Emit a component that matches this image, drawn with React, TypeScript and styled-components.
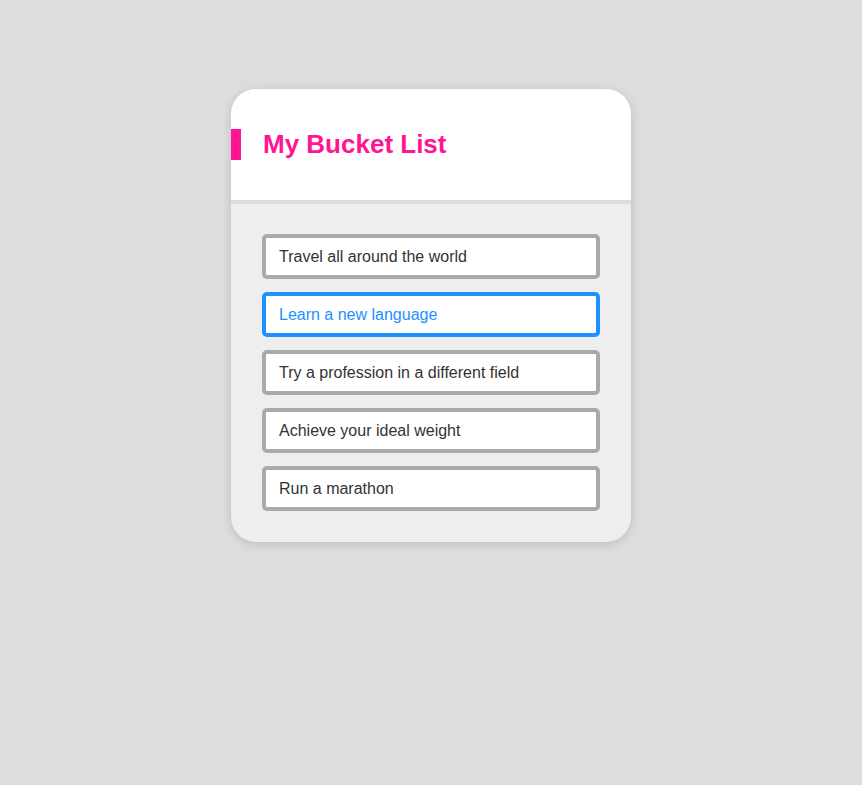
import React from "react";
import styled, { createGlobalStyle } from "styled-components";

const Global = createGlobalStyle`
  html, body { margin: 0; padding: 0; background: #dddddd; }
  body { font-family: "Liberation Sans", Arial, sans-serif; }
`;

const Page = styled.div`
  display: flex;
  justify-content: center;
  padding-top: 89px;
  min-height: 785px;
  box-sizing: border-box;
`;

const Card = styled.div`
  width: 400px;
  background: #eeeeee;
  border-radius: 25px;
  overflow: hidden;
  box-shadow: 0 2px 10px rgba(0, 0, 0, 0.15);
  align-self: flex-start;
`;

const Header = styled.div`
  background: #ffffff;
  padding: 40px 0;
  border-bottom: 4px solid #dddddd;
`;

const Title = styled.h1`
  margin: 0;
  border-left: 10px solid #ff1493;
  padding-left: 22px;
  font-size: 26px;
  line-height: 31px;
  font-weight: bold;
  color: #ff1493;
`;

const List = styled.ul`
  list-style: none;
  margin: 0;
  padding: 30px 31px 31px;
  display: flex;
  flex-direction: column;
  gap: 13px;
`;

const Item = styled.li<{ $active?: boolean }>`
  background: #ffffff;
  border: 4px solid ${(p) => (p.$active ? "#1e90ff" : "#aaaaaa")};
  border-radius: 5px;
  padding: 9px 13px 8px;
  font-size: 16px;
  line-height: 20px;
  color: ${(p) => (p.$active ? "#1e90ff" : "#333333")};
`;

const items = [
  "Travel all around the world",
  "Learn a new language",
  "Try a profession in a different field",
  "Achieve your ideal weight",
  "Run a marathon",
];

export default function App() {
  return (
    <>
      <Global />
      <Page>
        <Card>
          <Header>
            <Title>My Bucket List</Title>
          </Header>
          <List>
            {items.map((t, i) => (
              <Item key={t} $active={i === 1}>
                {t}
              </Item>
            ))}
          </List>
        </Card>
      </Page>
    </>
  );
}
